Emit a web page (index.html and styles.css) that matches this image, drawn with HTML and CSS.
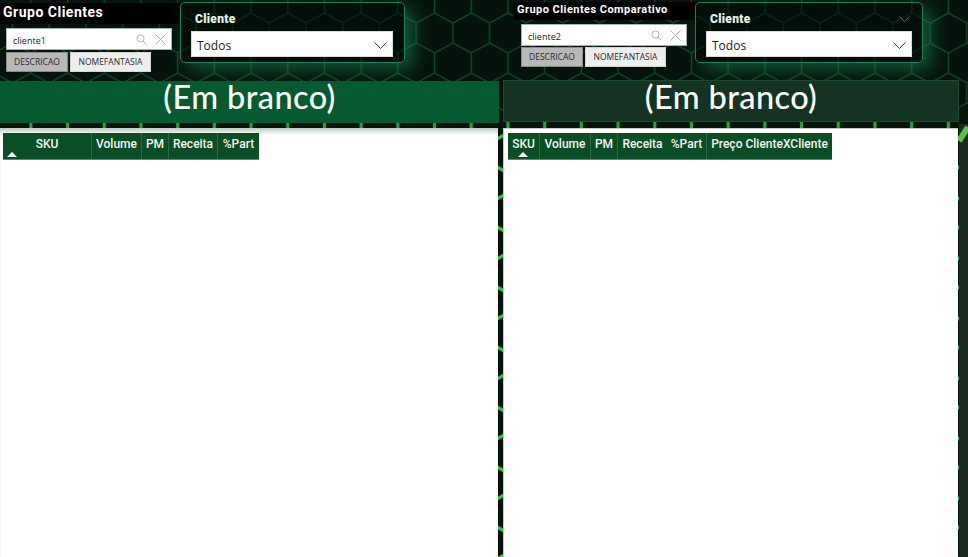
FILE: index.html
```html
<!DOCTYPE html>
<html lang="en">
<head>
    <meta charset="UTF-8">
    <title>Grupo Clientes</title>
    <link rel="stylesheet" href="styles.css">
</head>
<body>
    <!-- hexagon wallpaper behind the report -->
    <svg class="wallpaper" width="968" height="557" aria-hidden="true">
        <defs>
            <pattern id="hexDim" width="36.7" height="60" patternUnits="userSpaceOnUse" patternTransform="translate(12.5 23)">
                <path d="M0 0V20L18.35 30V50L0 60M36.7 0V20L18.35 30M18.35 50L36.7 60" fill="none" stroke="#0c4a2a" stroke-width="1.4"/>
            </pattern>
            <pattern id="hexBright" width="36.7" height="60" patternUnits="userSpaceOnUse" patternTransform="translate(12.5 23)">
                <path d="M0 0V20L18.35 30V50L0 60M36.7 0V20L18.35 30M18.35 50L36.7 60" fill="none" stroke="#3fbb4d" stroke-width="3.2"/>
            </pattern>
        </defs>
        <rect width="968" height="112" fill="url(#hexDim)"/>
        <rect y="112" width="968" height="445" fill="url(#hexBright)"/>
        <rect y="112" width="968" height="17" fill="#06200f" fill-opacity=".2"/>
        <rect x="959" y="124" width="9" height="433" fill="#1d2a20"/>
        <path d="M959 141L968 127" stroke="#5cc040" stroke-width="6"/>
    </svg>

    <main class="report">
        <section class="side side-left">
            <header class="filters">
                <div class="group">
                    <div class="group-title">Grupo Clientes</div>
                    <div class="search">
                        <span class="search-value">cliente1</span>
                        <svg class="search-icon" width="11" height="11" viewBox="0 0 11 11"><circle cx="4.5" cy="4.5" r="3.6"/><path d="M7.2 7.2L10.5 10.5"/></svg>
                        <svg class="clear-icon" width="11" height="11" viewBox="0 0 11 11"><path d="M.5 .5L10.5 10.5M10.5 .5L.5 10.5"/></svg>
                    </div>
                    <div class="fields">
                        <div class="field active">DESCRICAO</div>
                        <div class="field">NOMEFANTASIA</div>
                    </div>
                </div>
                <div class="slicer">
                    <div class="slicer-label">Cliente</div>
                    <div class="dropdown">
                        <span>Todos</span>
                        <svg class="chevron" width="13" height="7" viewBox="0 0 13 7"><path d="M.5 .5L6.5 6.5L12.5 .5"/></svg>
                    </div>
                </div>
            </header>
            <div class="banner">(Em branco)</div>
            <div class="panel">
                <div class="matrix">
                    <div class="col col-sku-wide">SKU<i class="sort sort-far"></i></div>
                    <div class="col col-volume">Volume</div>
                    <div class="col col-pm">PM</div>
                    <div class="col col-receita">Receita</div>
                    <div class="col col-part">%Part</div>
                </div>
            </div>
        </section>

        <section class="side side-right">
            <header class="filters">
                <div class="group">
                    <div class="group-title">Grupo Clientes Comparativo</div>
                    <div class="search">
                        <span class="search-value">cliente2</span>
                        <svg class="search-icon" width="11" height="11" viewBox="0 0 11 11"><circle cx="4.5" cy="4.5" r="3.6"/><path d="M7.2 7.2L10.5 10.5"/></svg>
                        <svg class="clear-icon" width="11" height="11" viewBox="0 0 11 11"><path d="M.5 .5L10.5 10.5M10.5 .5L.5 10.5"/></svg>
                    </div>
                    <div class="fields">
                        <div class="field active">DESCRICAO</div>
                        <div class="field">NOMEFANTASIA</div>
                    </div>
                </div>
                <div class="slicer">
                    <div class="slicer-label">Cliente
                        <svg class="chevron chevron-dim" width="11" height="6" viewBox="0 0 11 6"><path d="M.5 .5L5.5 5.5L10.5 .5"/></svg>
                    </div>
                    <div class="dropdown">
                        <span>Todos</span>
                        <svg class="chevron" width="13" height="7" viewBox="0 0 13 7"><path d="M.5 .5L6.5 6.5L12.5 .5"/></svg>
                    </div>
                </div>
            </header>
            <div class="banner">(Em branco)</div>
            <div class="panel">
                <div class="matrix">
                    <div class="col col-sku">SKU<i class="sort"></i></div>
                    <div class="col col-volume">Volume</div>
                    <div class="col col-pm">PM</div>
                    <div class="col col-receita no-rule">Receita</div>
                    <div class="col col-part">%Part</div>
                    <div class="col col-preco">Preço ClienteXCliente</div>
                </div>
            </div>
        </section>
    </main>
</body>
</html>
```

FILE: styles.css
```css
html, body {
    margin: 0;
    padding: 0;
    height: 100%;
}

body {
    position: relative;
    width: 968px;
    height: 557px;
    overflow: hidden;
    background: #05130c;
    font-family: "Open Sans", "Liberation Sans", sans-serif;
    color: #fff;
}

.wallpaper {
    position: absolute;
    top: 0;
    left: 0;
}

.report {
    position: relative;
    display: flex;
    height: 557px;
}

.side {
    display: flex;
    flex-direction: column;
}

.side-left {
    width: 500px;
}

.side-right {
    width: 468px;
}

/* filter strip */
.filters {
    display: flex;
    height: 81px;
    box-sizing: border-box;
    padding-top: 2px;
}

.side-right .filters {
    height: 80px;
}

.side-left .group {
    width: 180px;
    padding-top: 1px;
}

.side-right .group {
    width: 195px;
}

.group-title {
    background: #000;
    font-family: Roboto, "Liberation Sans", sans-serif;
    font-weight: 700;
    white-space: nowrap;
}

.side-left .group-title {
    height: 21px;
    padding-left: 3px;
    margin-bottom: 4px;
    font-size: 14px;
    line-height: 19px;
    letter-spacing: .5px;
}

.side-right .group-title {
    height: 18px;
    margin-left: 13px;
    padding-left: 4px;
    margin-bottom: 4px;
    font-size: 11px;
    line-height: 15px;
    letter-spacing: .45px;
}

.search {
    display: flex;
    align-items: center;
    box-sizing: border-box;
    width: 166px;
    height: 22px;
    background: #fff;
    border: 1px solid #aab0ac;
    padding: 0 5px 0 6px;
}

.side-left .search,
.side-left .fields {
    margin-left: 6px;
}

.side-right .search,
.side-right .fields {
    margin-left: 21px;
}

.search-value {
    flex: 1;
    padding-top: 3px;
    font-size: 9px;
    color: #222;
}

.search-icon,
.clear-icon {
    fill: none;
    stroke: #b4b4b4;
    stroke-width: 1;
}

.clear-icon {
    margin-left: 8px;
}

.fields {
    display: flex;
    gap: 2px;
    margin-top: 2px;
}

.side-right .fields {
    margin-top: 1px;
}

.field {
    box-sizing: border-box;
    width: 81px;
    height: 20px;
    background: #eee;
    color: #2a2a2a;
    border: 1px solid #d4d4d4;
    font-size: 8.5px;
    line-height: 18px;
    text-align: center;
}

.field.active {
    width: 62px;
    background: #b8b8b8;
    border-color: #8a8a8a;
}

.slicer {
    box-sizing: border-box;
    height: 61px;
    border: 1px solid #1a8056;
    border-radius: 5px;
    background: rgba(0, 12, 6, .55);
    box-shadow: 8px 6px 18px rgba(24, 130, 78, .65);
    padding: 4px 10px 0 10px;
}

.side-left .slicer {
    width: 225px;
    padding-right: 11px;
}

.side-right .slicer {
    width: 228px;
}

.slicer-label {
    display: flex;
    align-items: center;
    justify-content: space-between;
    height: 24px;
    padding-left: 4px;
    font-family: Roboto, "Liberation Sans", sans-serif;
    font-weight: 900;
    font-size: 12px;
    letter-spacing: .3px;
    color: #e8efe9;
}

.dropdown {
    display: flex;
    align-items: center;
    justify-content: space-between;
    box-sizing: border-box;
    height: 26px;
    background: #fff;
    border: 1px solid #ddd;
    padding: 2px 5px 0 5px;
    font-size: 12px;
    color: #222;
}

.chevron {
    fill: none;
    stroke: #444;
    stroke-width: 1;
}

.chevron-dim {
    stroke: #5c6a62;
    margin-right: 2px;
}

/* title bands */
.banner {
    box-sizing: border-box;
    height: 42px;
    font-family: Lato, Roboto, sans-serif;
    font-weight: 500;
    font-size: 32.5px;
    line-height: 32px;
    text-align: center;
    letter-spacing: .4px;
}

.side-left .banner {
    width: 499px;
    background: #055a2f;
}

.side-right .banner {
    width: 456px;
    margin-left: 3px;
    background: #143322;
    border: 1px solid #1b4a2e;
}

.panel {
    flex: 1;
    background: #fff;
    margin-top: 5px;
    padding: 5px;
    box-sizing: border-box;
}

.side-left .panel {
    width: 498px;
    padding-left: 3px;
    box-shadow: inset 0 6px 6px -4px rgba(60, 110, 80, .5);
}

.side-right .panel {
    width: 455px;
    margin-top: 6px;
    margin-left: 3px;
    border-top: 1px solid #c8c8c8;
    border-left: 1px solid #c8c8c8;
    padding-top: 4px;
    padding-left: 4px;
}

/* table header */
.matrix {
    display: flex;
    width: fit-content;
    height: 27px;
    box-sizing: border-box;
    background: #0a4f24;
    border-bottom: 1px solid #3a8cc8;
}

.col {
    position: relative;
    box-sizing: border-box;
    padding-top: 3px;
    font-family: Roboto, "Open Sans", sans-serif;
    font-weight: 500;
    font-size: 12px;
    line-height: 16px;
    text-align: center;
    white-space: nowrap;
    color: #f2f6f3;
    border-right: 1px solid #2c6a45;
}

.col:last-child,
.no-rule {
    border-right: 0;
}

.col-sku-wide {
    width: 89px;
}

.col-sku {
    width: 32px;
}

.col-volume {
    width: 51px;
}

.col-pm {
    width: 27px;
}

.col-receita {
    width: 49px;
}

.col-part {
    width: 40px;
}

.col-preco {
    width: 125px;
}

.side-left .col-volume {
    width: 50px;
}

.side-left .col-part {
    width: 41px;
}

/* sort arrow, sits over the header cell */
.sort {
    position: absolute;
    left: 10px;
    bottom: 2px;
    border-left: 5px solid transparent;
    border-right: 5px solid transparent;
    border-bottom: 5px solid #fff;
}

.sort-far {
    left: 4px;
}
```
